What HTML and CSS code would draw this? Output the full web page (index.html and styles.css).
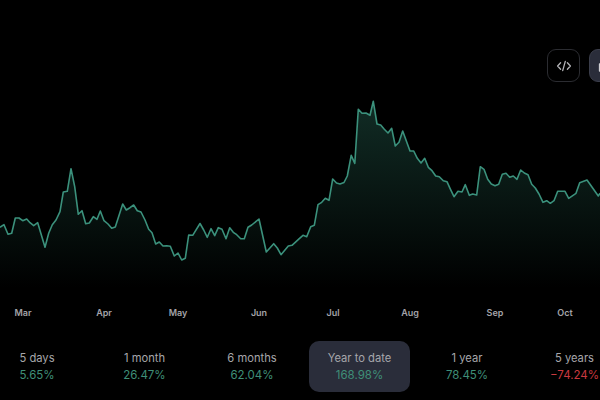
FILE: index.html
```html
<!DOCTYPE html>
<html lang="en">
<head>
<meta charset="utf-8">
<title>Performance chart</title>
<link rel="stylesheet" href="styles.css">
</head>
<body>
<main class="page">
  <div class="toolbar">
    <button class="tool" type="button" aria-label="Embed">
      <svg class="tool-icon" viewBox="0 0 16 16"><path d="M4.6 4.8 1.6 8l3 3.2M11.4 4.8l3 3.2-3 3.2M9.3 3.4 6.7 12.6"/></svg>
    </button>
    <button class="tool tool-on" type="button" aria-label="Photo">
      <svg class="tool-icon tool-icon-on" viewBox="0 0 16 16"><path d="M1.5 13V6h3l1.2-2h4.6l1.2 2h3v7z"/><circle cx="8" cy="9.2" r="2.3"/></svg>
    </button>
  </div>
  <svg class="chart" viewBox="0 82 600 238" aria-label="Price chart">
    <defs>
      <linearGradient id="fade" gradientUnits="userSpaceOnUse" x1="0" y1="100" x2="0" y2="288">
        <stop class="fade-top" offset="0"/>
        <stop class="fade-bottom" offset="1"/>
      </linearGradient>
    </defs>
    <path class="area" d="M0 227.3L4 224.7 8 234.3 11.7 233.3 15.3 218 19 218 22.7 220.7 26.7 219 30 222.7 33.7 225.7 37.7 222.7 45 247.3 48.7 233.3 52.3 224.7 56 220 60 211.7 63.3 192 67.3 191.3 71 168.7 74.7 186.7 78.3 214.3 82 210.7 85.7 223.7 89.3 223 93.3 216.7 97 219.3 100.3 211 104 220.7 108 224 111.7 228.3 115.3 227 122.7 204 126.3 210 130 207.7 133.7 205 137.3 210.7 141 212 145 220 148.7 229.3 152 232.7 155.7 244 159.3 242 163 246 166.7 245.7 170.3 246.3 174.3 256 178 253 181.7 260 185.3 258.3 188.7 235 192.7 235.3 200 223.5 203.7 230 207.3 237.3 211 228.7 214.7 235.7 218.3 227.7 222 229.3 226 238.7 229.7 227.7 233.3 232.3 236.7 234.7 240.7 238.7 244.3 238.7 248 227.3 251.7 225 259 219 266.3 252 273.7 243.7 277.3 248 281 254.7 288.3 246 292 245.3 299.3 238.7 303 235.3 306.7 236.7 310.7 226.7 314.3 225.3 318 204.7 321.7 202.3 325.3 198.3 329 200.3 332.7 179 336.5 183 340 184 344 182.5 347.3 176 351.2 155.3 354.8 163.3 358.3 109.3 362 113.3 366 113 370 115.3 373.3 101.3 377 124 380.7 125 384.3 129.3 388 133 391.7 128.3 395.3 146 399 142.3 402.7 131 410 151 413.7 151 417.3 158.3 421 163 424.7 158.3 428.3 167.3 432 170.7 435.7 176 439.3 176.7 443.3 180.7 447 181.7 450 188.3 454 196.7 458 191.3 462 192 465.3 184.7 469.3 195.3 472.7 194 476.7 195 480.3 166.7 484 169.3 487.7 179.3 491.3 184 495 185.7 498.7 184.3 502.3 174.3 506 173.3 509.7 177.3 513.3 176 517 179.3 520.7 170 524.3 173 528 174.7 531.7 184.3 535.3 188 539 194 543 202.3 546.7 200.7 550.3 203.3 554 200.7 557.7 191.3 565 191.3 568.7 198.3 576 193.3 579.7 182.7 587 180 598.3 196 600 193.3V290H0Z"/>
    <path class="line" d="M0 227.3L4 224.7 8 234.3 11.7 233.3 15.3 218 19 218 22.7 220.7 26.7 219 30 222.7 33.7 225.7 37.7 222.7 45 247.3 48.7 233.3 52.3 224.7 56 220 60 211.7 63.3 192 67.3 191.3 71 168.7 74.7 186.7 78.3 214.3 82 210.7 85.7 223.7 89.3 223 93.3 216.7 97 219.3 100.3 211 104 220.7 108 224 111.7 228.3 115.3 227 122.7 204 126.3 210 130 207.7 133.7 205 137.3 210.7 141 212 145 220 148.7 229.3 152 232.7 155.7 244 159.3 242 163 246 166.7 245.7 170.3 246.3 174.3 256 178 253 181.7 260 185.3 258.3 188.7 235 192.7 235.3 200 223.5 203.7 230 207.3 237.3 211 228.7 214.7 235.7 218.3 227.7 222 229.3 226 238.7 229.7 227.7 233.3 232.3 236.7 234.7 240.7 238.7 244.3 238.7 248 227.3 251.7 225 259 219 266.3 252 273.7 243.7 277.3 248 281 254.7 288.3 246 292 245.3 299.3 238.7 303 235.3 306.7 236.7 310.7 226.7 314.3 225.3 318 204.7 321.7 202.3 325.3 198.3 329 200.3 332.7 179 336.5 183 340 184 344 182.5 347.3 176 351.2 155.3 354.8 163.3 358.3 109.3 362 113.3 366 113 370 115.3 373.3 101.3 377 124 380.7 125 384.3 129.3 388 133 391.7 128.3 395.3 146 399 142.3 402.7 131 410 151 413.7 151 417.3 158.3 421 163 424.7 158.3 428.3 167.3 432 170.7 435.7 176 439.3 176.7 443.3 180.7 447 181.7 450 188.3 454 196.7 458 191.3 462 192 465.3 184.7 469.3 195.3 472.7 194 476.7 195 480.3 166.7 484 169.3 487.7 179.3 491.3 184 495 185.7 498.7 184.3 502.3 174.3 506 173.3 509.7 177.3 513.3 176 517 179.3 520.7 170 524.3 173 528 174.7 531.7 184.3 535.3 188 539 194 543 202.3 546.7 200.7 550.3 203.3 554 200.7 557.7 191.3 565 191.3 568.7 198.3 576 193.3 579.7 182.7 587 180 598.3 196 600 193.3"/>
    <g class="axis">
      <text x="23" y="315.5">Mar</text>
      <text x="104" y="315.5">Apr</text>
      <text x="178" y="315.5">May</text>
      <text x="259" y="315.5">Jun</text>
      <text x="333" y="315.5">Jul</text>
      <text x="410" y="315.5">Aug</text>
      <text x="495" y="315.5">Sep</text>
      <text x="565" y="315.5">Oct</text>
    </g>
  </svg>
  <ul class="periods">
    <li class="period"><div class="tab"><span class="tab-name">5 days</span><span class="tab-gain">5.65%</span></div></li>
    <li class="period"><div class="tab"><span class="tab-name">1 month</span><span class="tab-gain">26.47%</span></div></li>
    <li class="period"><div class="tab"><span class="tab-name">6 months</span><span class="tab-gain">62.04%</span></div></li>
    <li class="period"><div class="tab tab-on"><span class="tab-name">Year to date</span><span class="tab-gain">168.98%</span></div></li>
    <li class="period"><div class="tab"><span class="tab-name">1 year</span><span class="tab-gain">78.45%</span></div></li>
    <li class="period"><div class="tab"><span class="tab-name">5 years</span><span class="tab-loss">−74.24%</span></div></li>
  </ul>
</main>
</body>
</html>
```
FILE: styles.css
```css
* { box-sizing: border-box; }
html, body { margin: 0; padding: 0; background: #000; }
body { font-family: Inter, "Liberation Sans", sans-serif; }
.page { width: 600px; height: 400px; overflow: hidden; background: #000; }
.toolbar { display: flex; gap: 9px; height: 82px; padding: 49px 0 0 547px; width: 700px; }
.tool { flex: 0 0 33px; width: 33px; height: 33px; padding: 0; display: flex; align-items: center; justify-content: center; background: transparent; border: 1px solid #2b2c31; border-radius: 9px; }
.tool-on { background: #2a2d3a; border-color: #3a3d4a; }
.tool-icon { width: 16px; height: 16px; fill: none; stroke: #b4b4b8; stroke-width: 1.3; stroke-linecap: round; stroke-linejoin: round; }
.tool-icon-on { stroke: #d0d0d4; }
.chart { display: block; width: 600px; height: 238px; }
.fade-top { stop-color: #3fa58a; stop-opacity: 0.27; }
.fade-bottom { stop-color: #3fa58a; stop-opacity: 0; }
.area { fill: url(#fade); stroke: none; }
.line { fill: none; stroke: #3b917c; stroke-width: 1.6; stroke-linejoin: round; }
.axis text { font-size: 9px; font-weight: 600; fill: #a3a3a8; text-anchor: middle; }
.periods { list-style: none; display: flex; margin: 21px 0 0 -16.75px; padding: 0; width: 700px; }
.period { flex: 0 0 107.5px; display: flex; justify-content: center; }
.tab { width: 101px; height: 51px; border-radius: 10px; display: flex; flex-direction: column; align-items: center; justify-content: center; white-space: nowrap; font-size: 11.2px; line-height: 17px; }
.tab-on { background: #2a2d3a; }
.tab-name { color: #a6a6aa; }
.tab-gain { color: #3f8f78; font-size: 11.5px; }
.tab-loss { color: #c9393f; font-size: 11.5px; }
```
